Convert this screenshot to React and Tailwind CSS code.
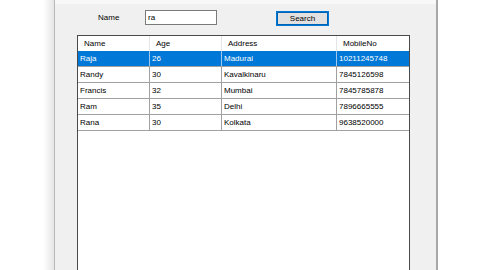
import React from "react";

const rows = [
  { name: "Raja", age: "26", address: "Madurai", mobile: "10211245748" },
  { name: "Randy", age: "30", address: "Kavalkinaru", mobile: "7845126598" },
  { name: "Francis", age: "32", address: "Mumbai", mobile: "7845785878" },
  { name: "Ram", age: "35", address: "Delhi", mobile: "7896665555" },
  { name: "Rana", age: "30", address: "Kolkata", mobile: "9638520000" },
];

const cols = ["w-[72px]", "w-[72px]", "w-[115px]", "w-[72px]"];

export default function App() {
  return (
    <div
      className="w-[480px] h-[270px] overflow-hidden flex bg-white text-black text-[8px] leading-none"
      style={{ fontFamily: '"Liberation Sans", Arial, sans-serif' }}
    >
      <div className="w-[54px] h-full bg-gradient-to-r from-white from-80% to-[#e6e6e6]"></div>
      <div className="w-[384px] h-full flex flex-col bg-[#f0f0f0] border-l border-[#b9b9b9] border-r-2 border-r-[#a8a8a8]">
        <div className="h-[4px] bg-[#f8f8f8]"></div>
        <div className="h-[31px] flex items-start">
          <div className="ml-[43px] mt-[10px] w-[30px]">Name</div>
          <div className="ml-[17px] mt-[6px] w-[72px] h-[15px] bg-white border border-[#7a7a7a] flex items-center pl-[2px]">
            ra
          </div>
          <div className="ml-[59px] mt-[7px] w-[53px] h-[15px] bg-[#e1e1e1] border border-[#0078d7] outline outline-1 outline-[#0063b1] -outline-offset-2 flex items-center justify-center">
            Search
          </div>
        </div>
        <div className="ml-[22px] w-[333px] flex-1 bg-white border border-[#4a4a4a] border-b-0 flex flex-col">
          <div className="h-[15px] flex bg-white">
            {["Name", "Age", "Address", "MobileNo"].map((h, i) => (
              <div
                key={h}
                className={`${cols[i]} h-full flex items-center pl-[6px] ${i < 3 ? "border-r border-[#e5e5e5]" : ""}`}
              >
                {h}
              </div>
            ))}
          </div>
          {rows.map((r, idx) => {
            const sel = idx === 0;
            return (
              <div
                key={r.name}
                className={`h-[16px] flex border-b border-[#a0a0a0] ${sel ? "bg-[#0078d7] text-white" : "bg-white"}`}
              >
                {[r.name, r.age, r.address, r.mobile].map((v, i) => (
                  <div
                    key={i}
                    className={`${cols[i]} h-full flex items-center pl-[2px] ${i < 3 ? (sel ? "border-r border-[#9fc8ee]" : "border-r border-[#a0a0a0]") : ""}`}
                  >
                    {v}
                  </div>
                ))}
              </div>
            );
          })}
        </div>
      </div>
      <div className="flex-1 h-full bg-white"></div>
    </div>
  );
}
